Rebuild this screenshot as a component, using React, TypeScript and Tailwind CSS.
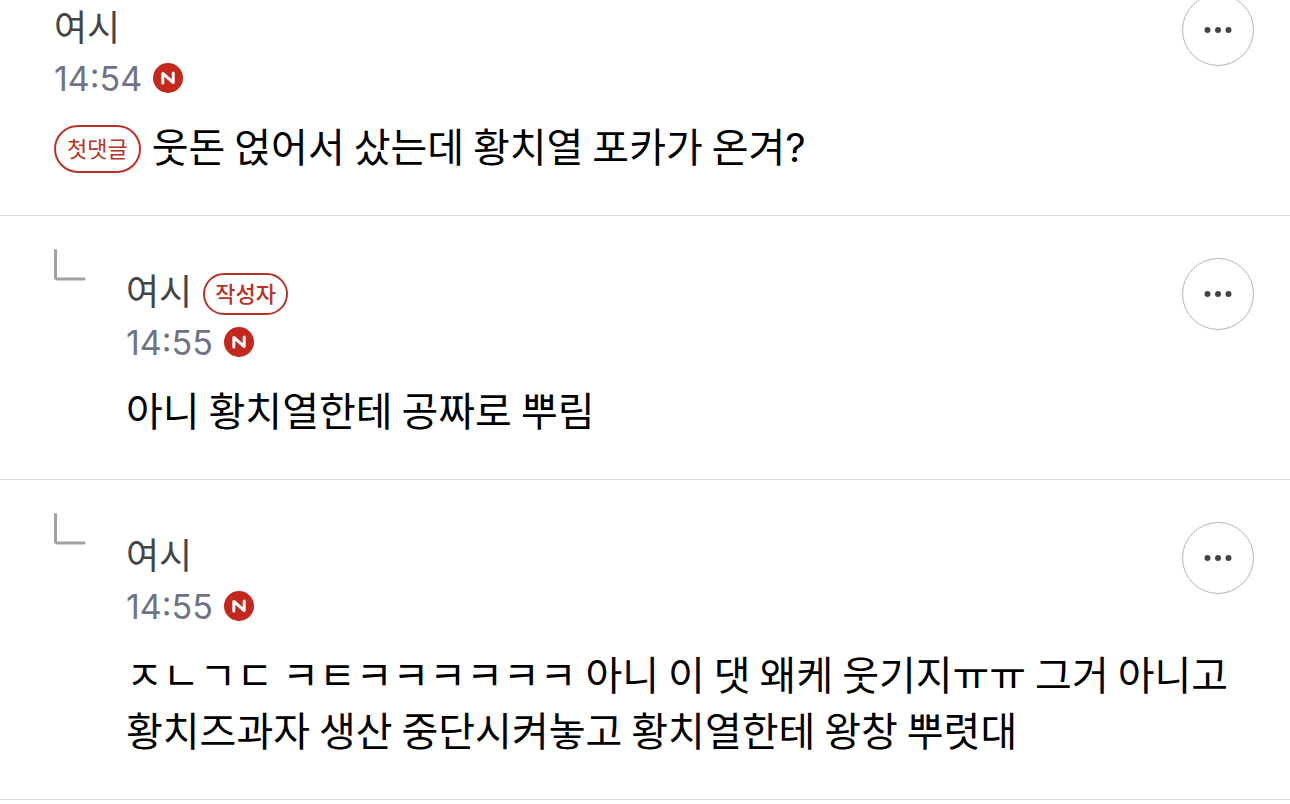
import React from "react";

type Comment = {
  id: number;
  author: string;
  time: string;
  text: string;
  reply?: boolean;
  first?: boolean;
  writer?: boolean;
};

const comments: Comment[] = [
  { id: 1, author: "여시", time: "14:54", text: "웃돈 얹어서 샀는데 황치열 포카가 온겨?", first: true },
  { id: 2, author: "여시", time: "14:55", text: "아니 황치열한테 공짜로 뿌림", reply: true, writer: true },
  {
    id: 3,
    author: "여시",
    time: "14:55",
    text: "ㅈㄴㄱㄷ ㅋㅌㅋㅋㅋㅋㅋㅋ 아니 이 댓 왜케 웃기지ㅠㅠ 그거 아니고\n황치즈과자 생산 중단시켜놓고 황치열한테 왕창 뿌렷대",
    reply: true,
  },
];

function NewMark() {
  return (
    <svg className="size-[30px] shrink-0" viewBox="0 0 30 30" role="img" aria-label="N">
      <circle cx="15" cy="15" r="15" fill="#c4281c" />
      <path d="M9.8 20V10.4L20.2 19.6V10" fill="none" stroke="#fff" strokeWidth="3" strokeLinecap="round" strokeLinejoin="round" />
    </svg>
  );
}

function ReplyMark() {
  return (
    <svg className="absolute left-[54px] top-[33px] size-8" viewBox="0 0 32 32" fill="none" aria-hidden="true">
      <path d="M1.5 1.5V27.5Q1.5 30 4 30H30" stroke="#a0a0a0" strokeWidth="3" strokeLinecap="round" />
    </svg>
  );
}

function Item({ c }: { c: Comment }) {
  return (
    <li className={`relative border-b border-[#dcdcdc] pb-[42px] pr-9 ${c.reply ? "pl-[126px] pt-[42px]" : "pl-[54px]"}`}>
      {c.reply && <ReplyMark />}
      <div className="flex items-start justify-between">
        <div className="pt-3">
          <div className="flex h-12 items-center gap-[11px]">
            <strong className="self-start text-[36px] font-normal leading-[38px] text-[#444]">{c.author}</strong>
            {c.writer && (
              <span className="flex h-[42px] items-center rounded-full border-2 border-[#b83229] px-[10px] pb-1 text-[22px] font-medium text-[#b83229]">
                작성자
              </span>
            )}
          </div>
          <div className="flex h-12 items-center gap-[11px]">
            <time className="font-[Inter] text-[34px] text-[#6f7383]">{c.time}</time>
            <NewMark />
          </div>
        </div>
        <button type="button" aria-label="더보기" className="flex size-[72px] shrink-0 items-center justify-center rounded-full border border-[#b4b4b4]">
          <svg viewBox="0 0 28 6" className="h-[6px] w-7" fill="#444" aria-hidden="true">
            <circle cx="3.5" cy="3" r="3" />
            <circle cx="14" cy="3" r="3" />
            <circle cx="24.5" cy="3" r="3" />
          </svg>
        </button>
      </div>
      <div className="mt-[15px] flex items-end gap-[11px]">
        {c.first && (
          <span className="flex h-12 shrink-0 items-center rounded-full border-2 border-[#b83229] px-[11px] pb-1 text-[22px] text-[#b83229]">첫댓글</span>
        )}
        <p className="whitespace-pre-line text-[40px] leading-[56px] text-black">
          {c.text.split("?").map((part, i) => (
            <React.Fragment key={i}>
              {i > 0 && <span className="font-[Inter] leading-none">?</span>}
              {part}
            </React.Fragment>
          ))}
        </p>
      </div>
    </li>
  );
}

export default function App() {
  return (
    <main className="overflow-hidden bg-white font-['Noto_Sans_CJK_KR',sans-serif]">
      <ul className="-mt-[6px]">
        {comments.map((c) => (
          <Item key={c.id} c={c} />
        ))}
      </ul>
    </main>
  );
}
